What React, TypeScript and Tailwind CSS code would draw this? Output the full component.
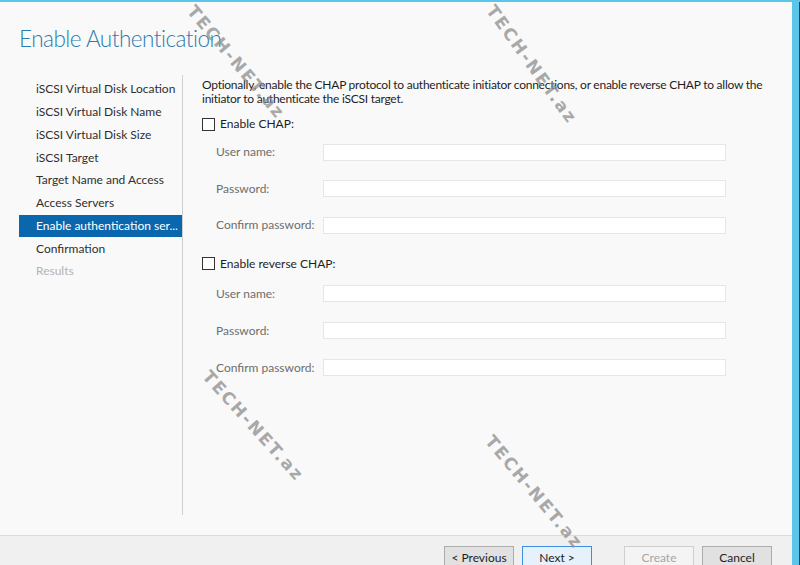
import React from 'react';

const navItems = [
  { label: 'iSCSI Virtual Disk Location' },
  { label: 'iSCSI Virtual Disk Name' },
  { label: 'iSCSI Virtual Disk Size' },
  { label: 'iSCSI Target' },
  { label: 'Target Name and Access' },
  { label: 'Access Servers' },
  { label: 'Enable authentication ser...', active: true },
  { label: 'Confirmation' },
  { label: 'Results', disabled: true },
];

function Field({ label, tall }: { label: string; tall?: boolean }) {
  return (
    <div className={'flex items-center pl-[14px] ' + (tall ? 'h-[37px]' : 'h-[36.5px]')}>
      <span className="w-[107px] shrink-0 text-[#6d6d6d] whitespace-nowrap">{label}</span>
      <div className="w-[403px] h-[17px] bg-white border border-[#e6e6e6]" />
    </div>
  );
}

function Checkbox({ label }: { label: string }) {
  return (
    <div className="flex items-center gap-[5px] h-[20px]">
      <div className="w-[13px] h-[13px] bg-white border border-[#333]" />
      <span className="text-[#1e1e1e]">{label}</span>
    </div>
  );
}

function Watermark({ x, y, angle }: { x: number; y: number; angle: number }) {
  // overlay watermark, position computed per instance
  return (
    <div
      className="absolute pointer-events-none font-bold text-[17px] text-[#8e8e8e] tracking-[2px] whitespace-nowrap origin-top-left opacity-75"
      style={{ left: x, top: y, transform: `rotate(${angle}deg)`, fontFamily: '"DejaVu Sans", sans-serif' }}
    >
      TECH-NET.az
    </div>
  );
}

export default function App() {
  return (
    <div
      className="relative w-[800px] h-[565px] overflow-hidden flex flex-col bg-[#f9f9f9] text-[12px]"
      style={{ fontFamily: 'Lato, "Noto Sans", sans-serif' }}
    >
      <div className="h-[2px] bg-[#5cc6ea] shrink-0" />
      <div className="flex flex-1 min-h-0">
        <div className="flex-1 flex flex-col min-w-0">
          <div className="h-[73px] pl-[19px] pt-[22px] shrink-0">
            <h1 className="text-[22.5px] font-light text-[#2b7bb0] leading-[30px] tracking-[-0.5px]">Enable Authentication</h1>
          </div>
          <div className="flex flex-1 min-h-0">
            <div className="w-[183px] shrink-0 pb-[20px] flex">
              <div className="flex-1 min-w-0 overflow-hidden pt-[3px] pl-[19px]">
                {navItems.map((it) => (
                  <div
                    key={it.label}
                    className={
                      'h-[22.75px] flex items-center pl-[17px] leading-none whitespace-nowrap ' +
                      (it.active ? 'bg-[#0a67ad] text-white' : it.disabled ? 'text-[#b4b4b4]' : 'text-[#2f2f2f]')
                    }
                  >
                    {it.label}
                  </div>
                ))}
              </div>
              <div className="w-px bg-[#cfcfcf]" />
            </div>
            <div className="flex-1 pl-[19px] pt-[3px] text-[#1e1e1e]">
              <p className="leading-[14px] w-[575px] tracking-[-0.25px]">
                Optionally, enable the CHAP protocol to authenticate initiator connections, or enable reverse CHAP to allow the initiator to authenticate the iSCSI target.
              </p>
              <div className="mt-[8px]">
                <Checkbox label="Enable CHAP:" />
                <div>
                  <Field label="User name:" />
                  <Field label="Password:" />
                  <Field label="Confirm password:" />
                </div>
              </div>
              <div className="mt-[10px]">
                <Checkbox label="Enable reverse CHAP:" />
                <div className="mt-[1.5px]">
                  <Field label="User name:" tall />
                  <Field label="Password:" tall />
                  <Field label="Confirm password:" tall />
                </div>
              </div>
            </div>
          </div>
          <div className="h-[30px] border-t border-[#dcdcdc] bg-[#f0f0f0] flex items-start justify-end pr-[20px] pt-[10px] shrink-0">
            <button className="w-[70px] h-[23px] border border-[#adadad] bg-[#e1e1e1] text-[#1e1e1e]">&lt; Previous</button>
            <button className="ml-[8px] w-[70px] h-[23px] border border-[#3d8ee0] bg-[#e5f1fb] text-[#1e1e1e]">Next &gt;</button>
            <button className="ml-[32px] w-[70px] h-[23px] border border-[#cfcfcf] bg-[#f4f4f4] text-[#a6a6a6]">Create</button>
            <button className="ml-[8px] w-[70px] h-[23px] border border-[#adadad] bg-[#e1e1e1] text-[#1e1e1e]">Cancel</button>
          </div>
        </div>
        <div className="w-[7px] bg-[#5cc6ea]" />
        <div className="w-px bg-[#2d3e4a]" />
      </div>
      <Watermark x={200} y={0} angle={50} />
      <Watermark x={500} y={0} angle={54} />
      <Watermark x={215} y={365} angle={48} />
      <Watermark x={498} y={430} angle={50} />
    </div>
  );
}
